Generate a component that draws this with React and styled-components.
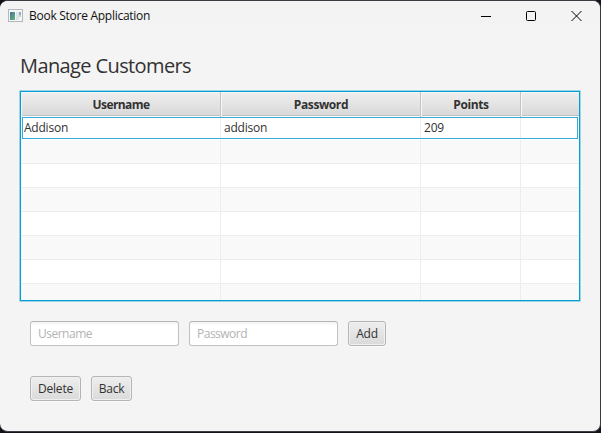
import React from "react";
import styled, { createGlobalStyle } from "styled-components";

const GlobalStyle = createGlobalStyle`
  * { box-sizing: border-box; }
  body {
    margin: 0;
    background: #12131a;
    font-family: "Open Sans", "Noto Sans", sans-serif;
    font-size: 12px;
    color: #323232;
  }
`;

const Window = styled.div`
  width: 601px;
  height: 432px;
  border: solid #3b3a40;
  border-width: 1px 1px 1px 0;
  border-radius: 8px;
  background: #f4f4f4;
  overflow: hidden;
`;

const TitleBar = styled.header`
  display: flex;
  align-items: center;
  height: 30px;
  padding-left: 8px;
  background: #f3f3f3;
  color: #111;
`;

const TitleText = styled.span`
  flex: 1;
  margin-left: 6px;
  line-height: 16px;
  letter-spacing: -0.27px;
  white-space: nowrap;
`;

const Caption = styled.span`
  display: flex;
  width: ${(p) => p.$width}px;
  justify-content: center;
`;

const Content = styled.main`
  padding: 23px 19px 0;
`;

const Heading = styled.h1`
  margin: 0 0 0 1px;
  height: 36px;
  font-size: 20px;
  font-weight: 400;
  line-height: 24px;
  letter-spacing: -0.61px;
`;

const Table = styled.div`
  width: 562px;
  height: 212px;
  border: 1px solid #9fd5e9;
  border-radius: 1px;
`;

const TableInner = styled.div`
  height: 210px;
  border: 1px solid #039ed3;
  background: #fff;
  overflow: hidden;
`;

const Columns = styled.div`
  display: grid;
  grid-template-columns: 200px 200px 100px 58px;
`;

const HeaderRow = styled(Columns)`
  height: 24px;
  background: linear-gradient(#efefef, #d9d9d9);
  border-bottom: 1px solid #c0c0c0;
`;

const HeaderCell = styled.div`
  border-right: ${(p) => (p.$last ? "0" : "1px solid #c4c4c4")};
  box-shadow: inset 1px 1px #f7f7f7;
  padding-left: 1px;
  font-weight: 700;
  line-height: 26px;
  text-align: center;
  letter-spacing: ${(p) => p.$spacing || "-0.4px"};
`;

const BodyRow = styled(Columns)`
  height: 24px;
  background: ${(p) => (p.$odd ? "#f9f9f9" : "#fff")};
`;

const Cell = styled.div`
  border: solid #ededed;
  border-width: 0 ${(p) => (p.$last ? 0 : 1)}px 1px 0;
`;

const FocusedRow = styled(Columns)`
  height: 24px;
  padding: 1px 0;
`;

const FocusedCell = styled.div`
  height: 22px;
  margin-left: ${(p) => (p.$first ? 1 : 0)}px;
  margin-right: ${(p) => (p.$last ? 1 : 0)}px;
  padding-left: ${(p) => (p.$first ? 1 : 3)}px;
  border: solid #36abd5;
  border-width: 1px ${(p) => (p.$last ? 1 : 0)}px 1px ${(p) => (p.$first ? 1 : 0)}px;
  box-shadow: ${(p) => (p.$last ? "none" : "inset -1px 0 #ededed")};
  line-height: 20px;
  letter-spacing: -0.22px;
`;

const Form = styled.div`
  display: flex;
  gap: 10px;
  margin: ${(p) => p.$top}px 0 0 11px;
`;

const Field = styled.input`
  width: 149px;
  height: 25px;
  padding: 0 7px;
  border: 1px solid #c1c1c1;
  border-top-color: #b5b5b5;
  border-radius: 3px;
  background: linear-gradient(#f3f3f3, #fff 4px);
  font: 12px "Open Sans", sans-serif;
  letter-spacing: -0.5px;
  outline: none;
  &::placeholder { color: #b3b3b3; opacity: 1; }
`;

const Button = styled.button`
  width: ${(p) => p.$width}px;
  height: 25px;
  padding: 0;
  border: 1px solid #b5b5b5;
  border-radius: 3px;
  background: linear-gradient(#eeeeee, #dadada);
  box-shadow: inset 0 0 0 1px #f0f0f0, 0 1px #fafafa;
  color: #323232;
  font: 12px "Open Sans", sans-serif;
  letter-spacing: ${(p) => p.$spacing}px;
`;

const stripes = [true, false, true, false, true, false, true];

function AppIcon() {
  return (
    <svg width="15" height="14" viewBox="0 0 15 14" shapeRendering="crispEdges">
      <defs>
        <linearGradient id="pane" x1="0" y1="0" x2="1" y2="1">
          <stop offset="0" stopColor="#4772a0" />
          <stop offset="1" stopColor="#61b878" />
        </linearGradient>
      </defs>
      <rect x="0.5" y="0.5" width="14" height="12" fill="#f5f6f6" stroke="#b2b8bb" />
      <rect x="2" y="3" width="5" height="8" fill="url(#pane)" />
      <rect x="8" y="3" width="3" height="8" fill="#e0e3e3" />
      <rect x="11" y="3" width="2" height="3" fill="#8daecb" />
      <rect x="11" y="6" width="2" height="2" fill="#b7ddbb" />
    </svg>
  );
}

export default function App() {
  return (
    <>
      <GlobalStyle />
      <Window>
        <TitleBar>
          <AppIcon />
          <TitleText>Book Store Application</TitleText>
          <Caption $width={46}>
            <svg width="10" height="11"><path d="M0 5.5H10" stroke="#000" /></svg>
          </Caption>
          <Caption $width={44}>
            <svg width="10" height="10"><rect x="0.5" y="0.5" width="9" height="9" rx="1" fill="none" stroke="#000" /></svg>
          </Caption>
          <Caption $width={47}>
            <svg width="11" height="10"><path d="M0.5 0L10.5 10M10.5 0L0.5 10" stroke="#000" /></svg>
          </Caption>
        </TitleBar>
        <Content>
          <Heading>Manage Customers</Heading>
          <Table>
            <TableInner>
              <HeaderRow>
                <HeaderCell $spacing="-0.6px">Username</HeaderCell>
                <HeaderCell>Password</HeaderCell>
                <HeaderCell>Points</HeaderCell>
                <HeaderCell $last />
              </HeaderRow>
              <FocusedRow>
                <FocusedCell $first>Addison</FocusedCell>
                <FocusedCell>addison</FocusedCell>
                <FocusedCell>209</FocusedCell>
                <FocusedCell $last />
              </FocusedRow>
              {stripes.map((odd, i) => (
                <BodyRow key={i} $odd={odd}>
                  <Cell />
                  <Cell />
                  <Cell />
                  <Cell $last />
                </BodyRow>
              ))}
            </TableInner>
          </Table>
          <Form $top={19}>
            <Field placeholder="Username" />
            <Field placeholder="Password" />
            <Button $width={38} $spacing={-0.2}>Add</Button>
          </Form>
          <Form $top={30}>
            <Button $width={51} $spacing={-0.2}>Delete</Button>
            <Button $width={41} $spacing={-0.3}>Back</Button>
          </Form>
        </Content>
      </Window>
    </>
  );
}
